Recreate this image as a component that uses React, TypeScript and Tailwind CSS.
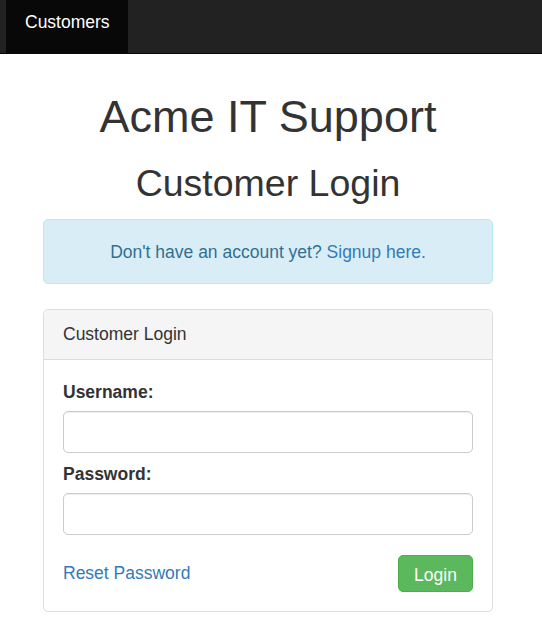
export default function App() {
  return (
    <div className="min-h-screen bg-white text-[#333] font-['Liberation_Sans',Arial,sans-serif] text-[17.5px]">
      <nav className="h-[54px] bg-[#222] border-b border-[#080808] pl-[6px] flex">
        <a href="#" className="w-[122px] h-full bg-[#080808] text-white flex items-start pt-[10px] pl-[19px] leading-[24px]">
          Customers
        </a>
      </nav>

      <div className="ml-[43px] w-[450px]">
        <h1 className="text-center text-[45px] leading-[50px] mt-[38px] mb-0">Acme IT Support</h1>
        <h2 className="text-center text-[37.5px] leading-[41px] mt-[21px] mb-0">Customer Login</h2>

        <div className="mt-[15px] h-[65px] bg-[#d9edf7] border border-[#bce8f1] rounded-[5px] text-[#31708f] flex items-center justify-center">
          <p className="pt-[2px]">
            Don't have an account yet?{" "}
            <a href="#" className="text-[#337ab7]">Signup here.</a>
          </p>
        </div>

        <div className="mt-[25px] border border-[#ddd] rounded-[5px]">
          <div className="h-[50px] bg-[#f5f5f5] border-b border-[#ddd] rounded-t-[5px] px-[19px] pb-[1px] flex items-center">
            Customer Login
          </div>
          <div className="px-[19px] pt-[21px] pb-[19px]">
            <label className="block font-bold leading-[22px]">Username:</label>
            <input type="text" className="mt-[8px] block w-full h-[42px] border border-[#ccc] rounded-[5px] shadow-[inset_0_1px_1px_rgba(0,0,0,0.075)]" />
            <label className="block font-bold leading-[22px] mt-[10px]">Password:</label>
            <input type="password" className="mt-[8px] block w-full h-[42px] border border-[#ccc] rounded-[5px] shadow-[inset_0_1px_1px_rgba(0,0,0,0.075)]" />
            <div className="mt-[20px] flex items-center justify-between">
              <a href="#" className="text-[#337ab7] mt-[-1px]">Reset Password</a>
              <button className="w-[75px] h-[37px] pt-[3px] bg-[#5cb85c] border border-[#4cae4c] rounded-[5px] text-white">
                Login
              </button>
            </div>
          </div>
        </div>
      </div>
    </div>
  );
}
